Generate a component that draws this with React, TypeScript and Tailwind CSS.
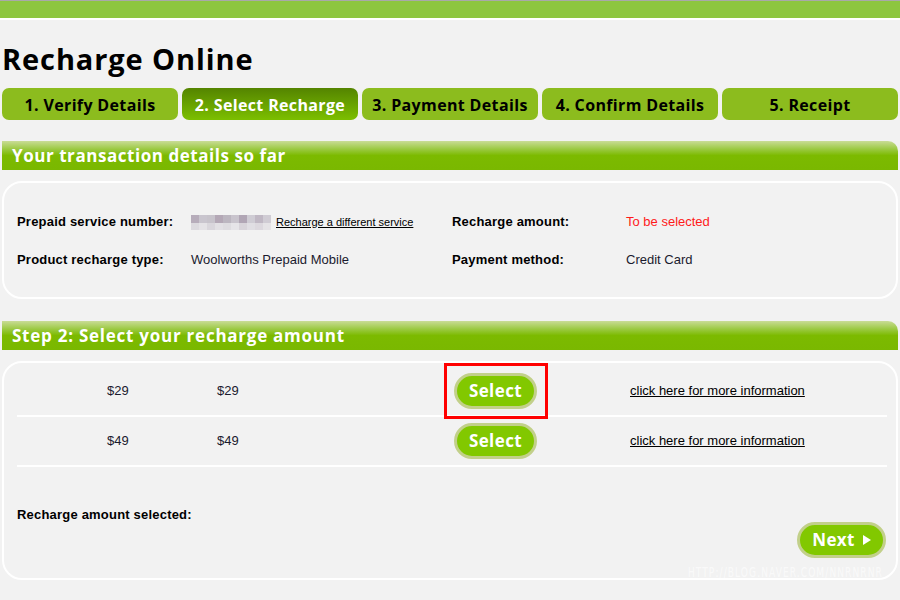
import React from "react";

const head = { fontFamily: '"Open Sans", "Noto Sans", sans-serif' };
const body = { fontFamily: '"Liberation Sans", Arial, sans-serif' };

const tabs = [
  "1. Verify Details",
  "2. Select Recharge",
  "3. Payment Details",
  "4. Confirm Details",
  "5. Receipt",
];

function SectionHeader({ title, spacing }: { title: string; spacing: string }) {
  return (
    <div
      className={`h-[29px] rounded-tr-[10px] bg-[linear-gradient(to_bottom,#c9dc96_0%,#98c83c_30%,#7cba00_50%,#7ab800_100%)] pl-[10px] flex items-center text-white font-bold text-[17px] ${spacing}`}
      style={head}
    >
      {title}
    </div>
  );
}

function Mosaic() {
  const top = ["#b7adbb", "#c9c5ce", "#c7c3cb", "#b4a8b6", "#bcb6c0", "#c9c4cd", "#b1a6b5", "#cfccd4", "#c0b8c4", "#d0ccd4"];
  const bot = ["#dcdadf", "#e4e2e6", "#d9d6dc", "#e2e0e4", "#dedce0", "#e6e4e8", "#d8d4da", "#e0dee3", "#dcd8de", "#e5e3e6"];
  return (
    <div className="flex flex-col">
      <div className="flex">
        {top.map((c, i) => (
          <div key={i} className="w-[8px] h-[8px]" style={{ background: c }} />
        ))}
      </div>
      <div className="flex">
        {bot.map((c, i) => (
          <div key={i} className="w-[8px] h-[7px]" style={{ background: c }} />
        ))}
      </div>
    </div>
  );
}

function PillButton({ label, arrow }: { label: string; arrow?: boolean }) {
  return (
    <div
      className={`h-[36px] ${arrow ? "w-[89px]" : "w-[83px]"} rounded-full border-[3px] border-[#c2d08a] bg-[#82c800] flex items-center justify-center gap-[8px] text-white font-bold text-[17px] tracking-[0.4px]`}
      style={head}
    >
      <span>{label}</span>
      {arrow && (
        <svg width="8" height="10" viewBox="0 0 8 10">
          <path d="M0 0 L8 5 L0 10 Z" fill="#fff" />
        </svg>
      )}
    </div>
  );
}

function AmountRow({ amount, first }: { amount: string; first?: boolean }) {
  return (
    <div className="h-[50px] border-b-2 border-white grid grid-cols-[90px_110px_237px_176px_1fr] items-center text-[13px] text-[#1a1a2e]" style={body}>
      <div />
      <div>{amount}</div>
      <div>{amount}</div>
      <div className="relative w-[83px]">
        <PillButton label="Select" />
        {first && (
          <div className="absolute left-[-10px] top-[-10px] w-[104px] h-[56px] border-[3px] border-[#ff0000]" />
        )}
      </div>
      <div className="underline text-[#000]">click here for more information</div>
    </div>
  );
}

export default function App() {
  return (
    <div className="w-[900px] h-[600px] bg-[#f2f2f2] overflow-hidden relative">
      <div className="h-px bg-[#a9a9a9]" />
      <div className="h-[17px] bg-[#8dc63f]" />
      <div className="h-[2px] bg-white" />

      <div className="px-[2px]">
        <h1 className="mt-[20px] h-[38px] leading-[38px] text-[29px] font-bold text-black tracking-[0.9px]" style={head}>
          Recharge Online
        </h1>

        <div className="mt-[10px] flex gap-[4px]">
          {tabs.map((t, i) => (
            <div
              key={t}
              className={`flex-1 h-[32px] pt-[2px] rounded-[7px] flex items-center justify-center text-[16px] font-bold tracking-[0.35px] ${
                i === 1
                  ? "bg-[linear-gradient(to_bottom,#548400,#7cbf00)] text-white"
                  : "bg-[#8cbc1e] text-black"
              }`}
              style={head}
            >
              {t}
            </div>
          ))}
        </div>

        <div className="mt-[21px]">
          <SectionHeader title="Your transaction details so far" spacing="tracking-[0.55px]" />
        </div>

        <div className="mt-[11px] h-[118px] border-2 border-white rounded-[20px] pt-[20px] pl-[13px]">
          <div className="grid grid-cols-[174px_261px_174px_1fr] auto-rows-[38px] items-center text-[13px] text-[#1a1a2e]" style={body}>
            <div className="font-bold text-black tracking-[0.2px]">Prepaid service number:</div>
            <div className="flex items-center gap-[5px]">
              <Mosaic />
              <span className="underline text-[11px] text-black">Recharge a different service</span>
            </div>
            <div className="font-bold text-black tracking-[0.2px]">Recharge amount:</div>
            <div className="text-[#ff1a1a]">To be selected</div>

            <div className="font-bold text-black tracking-[0.2px]">Product recharge type:</div>
            <div>Woolworths Prepaid Mobile</div>
            <div className="font-bold text-black tracking-[0.2px]">Payment method:</div>
            <div>Credit Card</div>
          </div>
        </div>

        <div className="mt-[22px]">
          <SectionHeader title="Step 2: Select your recharge amount" spacing="tracking-[0.75px]" />
        </div>

        <div className="mt-[11px] h-[219px] border-2 border-white rounded-[20px] relative">
          <div className="ml-[13px] mr-[9px] pt-[4px]">
            <AmountRow amount="$29" first />
            <AmountRow amount="$49" />
          </div>
          <div className="pl-[13px] pt-[40px] h-[16px] leading-[16px] text-[13px] font-bold text-black box-content tracking-[0.2px]" style={body}>
            Recharge amount selected:
          </div>
          <div className="flex justify-end pr-[10px] mt-[-1px]">
            <PillButton label="Next" arrow />
          </div>
          <div
            className="absolute right-[13px] bottom-[-1px] text-[14px] text-white/60 tracking-[1.5px] leading-none"
            style={{ fontFamily: '"DejaVu Sans Condensed", "DejaVu Sans", sans-serif', transform: "scaleX(0.72)", transformOrigin: "right" }}
          >
            HTTP://BLOG.NAVER.COM/NNRNRNR
          </div>
        </div>
      </div>
    </div>
  );
}
